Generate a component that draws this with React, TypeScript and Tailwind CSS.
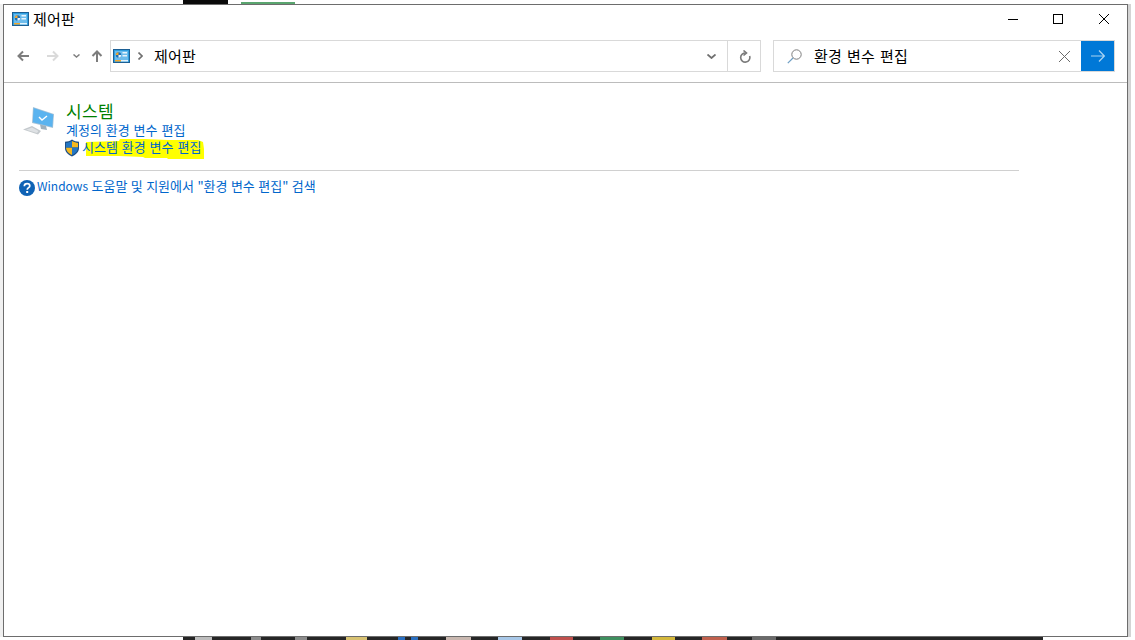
import React from "react";

const font = { fontFamily: '"Noto Sans CJK KR", "Noto Sans", sans-serif' };

function PanelIcon() {
  return (
    <svg width="17" height="14" viewBox="0 0 17 14" className="shrink-0">
      <rect x="0.5" y="0.5" width="16" height="13" fill="#2f9fe0" stroke="#1c5f94" />
      <rect x="2" y="2" width="13" height="9" fill="#6dbcec" />
      <circle cx="5.5" cy="6" r="2.7" fill="#1f6fb4" />
      <path d="M5.5 6 V3.3 A2.7 2.7 0 0 0 2.8 6 Z" fill="#f2a72e" />
      <path d="M5.5 6 H8.2 A2.7 2.7 0 0 1 5.5 8.7 Z" fill="#eef6fb" />
      <rect x="9.5" y="3" width="4.5" height="1.5" fill="#e8f4fb" />
      <rect x="9.5" y="6" width="4.5" height="1.5" fill="#e8f4fb" />
      <rect x="2" y="11" width="6" height="1.5" fill="#f2a72e" />
      <rect x="8" y="11" width="7" height="1.5" fill="#e6f3fb" />
    </svg>
  );
}

function ComputerIcon() {
  return (
    <svg width="32" height="30" viewBox="0 0 32 30" className="shrink-0">
      <path d="M11 1 L32 8 L31 22 L10 17 Z" fill="#a9c4d8" />
      <path d="M11.6 2 L31.2 8.6 L30.4 21 L10.8 16.2 Z" fill="#5ab3ef" />
      <path d="M17 11 L20 14 L25 10" fill="none" stroke="#ffffff" strokeWidth="1.4" />
      <path d="M18 18.5 L24 20 L25 24 L19 23 Z" fill="#9fb0bc" />
      <path d="M1 23.5 L10 20 L19 25 L16 28.5 Z" fill="#c4c9cd" />
      <path d="M4 23.7 L10 21.4 L16.5 25 L15 27 Z" fill="#dfe2e5" />
    </svg>
  );
}

function ShieldIcon() {
  return (
    <svg width="16" height="18" viewBox="0 0 16 18" className="shrink-0">
      <path d="M8 0.5 C10 2 12.5 2.6 15 2.8 V9 C15 13 12 15.8 8 17.5 C4 15.8 1 13 1 9 V2.8 C3.5 2.6 6 2 8 0.5 Z" fill="#1d4f86" />
      <path d="M8 2 C10 3.2 12 3.7 14 3.9 V8.5 H8 Z" fill="#f6b91f" />
      <path d="M8 8.5 H2 C2.2 12.3 4.8 14.6 8 16 Z" fill="#f6b91f" />
      <path d="M8 2 V8.5 H2 V3.9 C4 3.7 6 3.2 8 2 Z" fill="#2477c4" />
      <path d="M8 8.5 H14 C13.8 12.3 11.2 14.6 8 16 Z" fill="#2477c4" />
    </svg>
  );
}

function HelpIcon() {
  return (
    <svg width="16" height="16" viewBox="0 0 16 16" className="shrink-0">
      <circle cx="8" cy="8" r="8" fill="#0f62b5" />
      <path d="M5.3 6.2 C5.3 4.6 6.5 3.6 8.1 3.6 C9.7 3.6 10.8 4.6 10.8 5.9 C10.8 7.6 8.2 7.8 8.2 9.8" fill="none" stroke="#ffffff" strokeWidth="1.7" />
      <rect x="7.2" y="11" width="2" height="2" fill="#ffffff" />
    </svg>
  );
}

// hand drawn marker stroke over the second link
function Highlight() {
  return (
    <svg width="122" height="22" viewBox="0 0 122 22" className="absolute left-[1px] top-0">
      <path
        d="M3 3 L36 2 L37 0 L62 0 L85 1 L115 1 L120 3 L121 10 L121 20 L115 20 L85 20 L84 19 L62 19 L60 18 L36 17 L3 17 Z"
        fill="#ffff00"
      />
    </svg>
  );
}

function NavArrow({ dir, color }: { dir: "left" | "right" | "up"; color: string }) {
  const d = {
    left: "M12 6 H1.5 M6 1.5 L1.5 6 L6 10.5",
    right: "M0 6 H10.5 M6 1.5 L10.5 6 L6 10.5",
    up: "M6 12 V1.5 M1.5 6 L6 1.5 L10.5 6",
  }[dir];
  return (
    <svg width="12" height="12" viewBox="0 0 12 12" fill="none" stroke={color} strokeWidth="2" className="shrink-0">
      <path d={d} />
    </svg>
  );
}

function Chevron({ w, h, color, strokeWidth }: { w: number; h: number; color: string; strokeWidth: number }) {
  return (
    <svg width={w} height={h} viewBox={`0 0 ${w} ${h}`} fill="none" stroke={color} strokeWidth={strokeWidth} className="shrink-0">
      <path d={`M0.5 0.5 L${w / 2} ${h - 1} L${w - 0.5} 0.5`} />
    </svg>
  );
}

function Cross({ size, color }: { size: number; color: string }) {
  return (
    <svg width={size} height={size} viewBox={`0 0 ${size} ${size}`} fill="none" stroke={color} className="shrink-0">
      <path d={`M0 0 L${size} ${size} M${size} 0 L0 ${size}`} />
    </svg>
  );
}

export default function App() {
  return (
    <div className="w-[1135px] h-[640px] flex flex-col bg-white overflow-hidden" style={font}>
      {/* what is left of the desktop above the window */}
      <div className="h-1 flex shrink-0 pl-[183px]">
        <div className="w-[45px] bg-[#0a0a0a]" />
        <div className="w-[13px]" />
        <div className="w-[54px] h-[2px] mt-[2px] bg-[#5aa56f]" />
      </div>

      <div className="flex flex-1 min-h-0">
        <div className="w-[3px] shrink-0 bg-[#f0f0f0]" />
        <div className="w-[1125px] flex flex-col border border-[#6d6d6d] bg-white">
          {/* title bar */}
          <div className="h-[31px] shrink-0 flex items-center pl-2 pb-[3px]">
            <PanelIcon />
            <span className="ml-[4px] mb-[2px] text-[15px] tracking-[0.2px] text-black leading-none">제어판</span>
            <div className="ml-auto flex items-center pr-[18px]">
              <div className="w-[10px] h-px bg-black" />
              <div className="ml-[35px] w-[10px] h-[10px] border border-black" />
              <div className="ml-[36px]">
                <Cross size={10} color="#000000" />
              </div>
            </div>
          </div>

          {/* nav bar */}
          <div className="h-[47px] shrink-0 flex items-start border-b border-[#bcbcbc] pt-[4px] pr-[12px]">
            <div className="w-[106px] h-[32px] flex items-center pl-[13px] shrink-0">
              <NavArrow dir="left" color="#7d7d7d" />
              <div className="ml-[18px]">
                <NavArrow dir="right" color="#dadada" />
              </div>
              <div className="ml-[14px]">
                <Chevron w={7} h={4} color="#808080" strokeWidth={1.5} />
              </div>
              <div className="ml-[11px]">
                <NavArrow dir="up" color="#7d7d7d" />
              </div>
            </div>
            <div className="w-[651px] h-[32px] flex items-center border border-[#d9d9d9] shrink-0">
              <div className="ml-[2px]">
                <PanelIcon />
              </div>
              <svg width="5" height="8" viewBox="0 0 5 8" fill="none" stroke="#707070" strokeWidth="1.6" className="ml-[8px] shrink-0">
                <path d="M0.5 0.5 L4 4 L0.5 7.5" />
              </svg>
              <span className="ml-[11px] mb-[2px] text-[15px] tracking-[0.2px] text-black leading-none">제어판</span>
              <div className="ml-auto w-[33px] h-full flex items-center justify-center pl-[2px]">
                <Chevron w={9} h={5} color="#707070" strokeWidth={1.8} />
              </div>
              <div className="w-[33px] h-full flex items-center justify-center pl-[2px] border-l border-[#d9d9d9]">
                <svg width="12" height="13" viewBox="0 0 12 13" fill="none" stroke="#7a7a7a" strokeWidth="1.6">
                  <path d="M7 3 A4.6 4.6 0 1 0 10.6 6" />
                  <path d="M4.5 0.5 L7.5 3 L4.5 5.5" />
                </svg>
              </div>
            </div>
            <div className="ml-[12px] w-[342px] h-[32px] flex items-center border border-[#d9d9d9]">
              <svg width="15" height="15" viewBox="0 0 15 15" fill="none" className="ml-[13px] shrink-0">
                <circle cx="9.5" cy="5.5" r="4.7" stroke="#7c7c7c" />
                <path d="M6 9 L0.8 14.2" stroke="#6f9fc4" strokeWidth="1.2" />
              </svg>
              <span className="ml-[12px] mb-[2px] text-[15px] tracking-[0.2px] [word-spacing:1.5px] text-black leading-none">
                환경 변수 편집
              </span>
              <div className="ml-auto mr-[11px]">
                <Cross size={11} color="#6a6a6a" />
              </div>
              <div className="w-[33px] h-full bg-[#0078d7] flex items-center justify-center">
                <svg width="14" height="12" viewBox="0 0 14 12" fill="none" stroke="#a9d3f2" strokeWidth="1.2">
                  <path d="M0 6 H13 M8 0.5 L13.3 6 L8 11.5" />
                </svg>
              </div>
            </div>
          </div>

          {/* results */}
          <div className="flex-1 pl-[15px] pt-[17px]">
            <div className="w-[1000px]">
              <div className="flex pl-[3px]">
                <div className="mt-[6px]">
                  <ComputerIcon />
                </div>
                <div className="ml-[12px]">
                  <div className="text-[17px] leading-[22px] tracking-[0.4px] text-[#007f00]">시스템</div>
                  <div className="text-[13px] leading-[15px] pb-[2px] [word-spacing:1px] text-[#0066cc]">계정의 환경 변수 편집</div>
                  <div className="flex items-start -ml-[2px]">
                    <ShieldIcon />
                    <div className="relative ml-[2px]">
                      <Highlight />
                      <span className="relative block text-[13px] leading-[15px] pb-[2px] [word-spacing:1px] text-[#0066cc]">
                        시스템 환경 변수 편집
                      </span>
                    </div>
                  </div>
                </div>
              </div>
              <div className="mt-[13px] h-px bg-[#d0d0d0]" />
              <div className="mt-[9px] flex items-start">
                <HelpIcon />
                <span className="ml-[2px] text-[13px] leading-[11px] pb-[6px] [word-spacing:0.5px] text-[#0066cc]">
                  <span className="text-[12px]">Windows</span> 도움말 및 지원에서 "환경 변수 편집" 검색
                </span>
              </div>
            </div>
          </div>
        </div>
        <div className="w-[3px] shrink-0 bg-[#d4d4d4]" />
      </div>

      {/* taskbar edge below the window, with the tops of its icons */}
      <div className="h-[3px] flex shrink-0 ml-[183px] mr-[92px] bg-[#262626]">
        <div className="ml-[12px] w-[17px] bg-[#bdbdbd]" />
        <div className="ml-[39px] w-[10px] bg-[#8c8c8c]" />
        <div className="ml-[34px] w-[12px] bg-[#8c8c8c]" />
        <div className="ml-[39px] w-[21px] bg-[#d8c272]" />
        <div className="ml-[31px] w-[7px] bg-[#2a6fc0]" />
        <div className="ml-[6px] w-[7px] bg-[#2a6fc0]" />
        <div className="ml-[28px] w-[25px] bg-[#c9b8b0]" />
        <div className="ml-[27px] w-[24px] bg-[#a8c8e8]" />
        <div className="ml-[28px] w-[23px] bg-[#c0504d]" />
        <div className="ml-[27px] w-[24px] bg-[#3f8f5f]" />
        <div className="ml-[28px] w-[23px] bg-[#d4b83c]" />
        <div className="ml-[27px] w-[25px] bg-[#c0604d]" />
        <div className="ml-[25px] w-[24px] bg-[#6a6a6a]" />
      </div>
    </div>
  );
}
